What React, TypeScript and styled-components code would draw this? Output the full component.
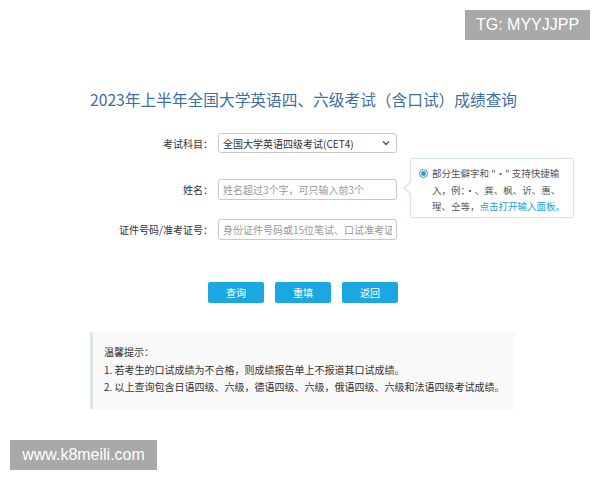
import * as React from 'react';
import styled, { createGlobalStyle } from 'styled-components';

const GlobalStyle = createGlobalStyle`
    html, body {
        margin: 0;
        padding: 0;
        background: #fff;
    }
    body {
        font-family: "Noto Sans CJK SC", "Noto Sans", sans-serif;
        color: #333;
    }
`;

const PageHtml = styled.div`
    position: relative;
    width: 600px;
    height: 480px;
    overflow: hidden;
`;

const WatermarkHtml = styled.div<{ $corner: 'top' | 'bottom' }>`
    position: absolute;
    ${p => p.$corner === 'top' ? 'top: 10px; right: 10px; width: 125px;' : 'top: 440px; left: 10px; width: 147px;'}
    height: 30px;
    background: #a9a9a9;
    color: #fff;
    font-family: "Liberation Sans", Arial, sans-serif;
    font-size: 16px;
    line-height: 30px;
    text-align: center;
`;

const MainHtml = styled.div`
    width: 426px;
    margin-left: 90px;
    padding-top: 88px;
`;

const TitleHtml = styled.h1`
    margin: 0 0 21px 0;
    font-size: 15.7px;
    font-weight: normal;
    line-height: 24px;
    text-align: center;
    color: #3c6fa4;
    white-space: nowrap;
`;

const RowHtml = styled.div<{ $gap: number }>`
    position: relative;
    display: flex;
    align-items: center;
    margin-top: ${p => p.$gap}px;
`;

const LabelHtml = styled.label`
    width: 123px;
    padding-right: 5px;
    text-align: right;
    font-size: 10px;
    color: #333;
    white-space: nowrap;
`;

const FieldHtml = styled.div`
    box-sizing: border-box;
    width: 179px;
    height: 20px;
    display: flex;
    align-items: center;
    justify-content: space-between;
    padding: 0 6px 0 4px;
    border: 1px solid #c9c9c9;
    border-radius: 3px;
    font-size: 10px;
    color: #333;
    white-space: nowrap;
    overflow: hidden;
`;

const InputHtml = styled.input`
    box-sizing: border-box;
    width: 179px;
    height: 21px;
    padding: 0 4px;
    border: 1px solid #c9c9c9;
    border-radius: 3px;
    font-family: inherit;
    font-size: 10px;
    color: #333;
    outline: none;
    &::placeholder { color: #999; }
`;

const TipHtml = styled.div`
    position: absolute;
    left: 320px;
    top: -21px;
    box-sizing: border-box;
    width: 164px;
    height: 60px;
    padding: 6px 4px 0 8px;
    display: flex;
    align-items: flex-start;
    gap: 4px;
    background: #fff;
    border: 1px solid #d6e4ee;
    border-radius: 3px;
    box-shadow: 0 0 3px rgba(0, 0, 0, 0.06);
    font-size: 9.5px;
    line-height: 16.5px;
    color: #555;
    white-space: nowrap;
    &::before, &::after {
        content: '';
        position: absolute;
        top: 22px;
        border-style: solid;
        border-color: transparent;
    }
    &::before {
        left: -8px;
        border-width: 7px 8px 7px 0;
        border-right-color: #d6e4ee;
    }
    &::after {
        left: -6px;
        top: 23px;
        border-width: 6px 7px 6px 0;
        border-right-color: #fff;
    }
`;

const RadioHtml = styled.span`
    flex: none;
    box-sizing: border-box;
    width: 9px;
    height: 9px;
    margin-top: 4px;
    border-radius: 50%;
    border: 1px solid #3a9ad9;
    display: flex;
    align-items: center;
    justify-content: center;
    &::after {
        content: '';
        width: 5px;
        height: 5px;
        border-radius: 50%;
        background: #3a9ad9;
    }
`;

const LinkHtml = styled.a`
    color: #1a9fd8;
    text-decoration: none;
`;

const ButtonsHtml = styled.div`
    display: flex;
    gap: 11px;
    margin: 42px 0 0 118px;
`;

const ButtonHtml = styled.button`
    width: 56px;
    height: 21px;
    padding: 0;
    border: none;
    border-radius: 2px;
    background: #1ba8e2;
    color: #fff;
    font-family: inherit;
    font-size: 10px;
`;

const NoticeHtml = styled.div`
    box-sizing: border-box;
    width: 425px;
    height: 77px;
    margin-top: 29px;
    padding: 11px 0 0 11px;
    border-left: 3px solid #dce5eb;
    background: #f9f9f9;
    font-size: 10px;
    line-height: 17.5px;
    color: #333;
`;

function Chevron()
{
    return (
        <svg width="8" height="6" viewBox="0 0 8 6">
            <path d="M1 1.5 L4 4.5 L7 1.5" fill="none" stroke="#555" strokeWidth="1.4" />
        </svg>
    );
}

export default function App()
{
    return (
        <PageHtml>
            <GlobalStyle />
            <MainHtml>
                <TitleHtml>2023年上半年全国大学英语四、六级考试（含口试）成绩查询</TitleHtml>
                <RowHtml $gap={0}>
                    <LabelHtml>考试科目：</LabelHtml>
                    <FieldHtml>
                        全国大学英语四级考试(CET4)
                        <Chevron />
                    </FieldHtml>
                </RowHtml>
                <RowHtml $gap={26}>
                    <LabelHtml>姓名：</LabelHtml>
                    <InputHtml placeholder="姓名超过3个字，可只输入前3个" />
                    <TipHtml>
                        <RadioHtml />
                        <div>
                            部分生僻字和 "·" 支持快捷输<br />
                            入，例：·、龚、枫、䜣、惠、<br />
                            瑆、仝等，<LinkHtml href="#">点击打开输入面板。</LinkHtml>
                        </div>
                    </TipHtml>
                </RowHtml>
                <RowHtml $gap={19}>
                    <LabelHtml>证件号码/准考证号：</LabelHtml>
                    <InputHtml placeholder="身份证件号码或15位笔试、口试准考证号" />
                </RowHtml>
                <ButtonsHtml>
                    <ButtonHtml>查询</ButtonHtml>
                    <ButtonHtml>重填</ButtonHtml>
                    <ButtonHtml>返回</ButtonHtml>
                </ButtonsHtml>
                <NoticeHtml>
                    温馨提示：<br />
                    1. 若考生的口试成绩为不合格，则成绩报告单上不报道其口试成绩。<br />
                    2. 以上查询包含日语四级、六级，德语四级、六级，俄语四级、六级和法语四级考试成绩。
                </NoticeHtml>
            </MainHtml>
            <WatermarkHtml $corner="top">TG: MYYJJPP</WatermarkHtml>
            <WatermarkHtml $corner="bottom">www.k8meili.com</WatermarkHtml>
        </PageHtml>
    );
}
